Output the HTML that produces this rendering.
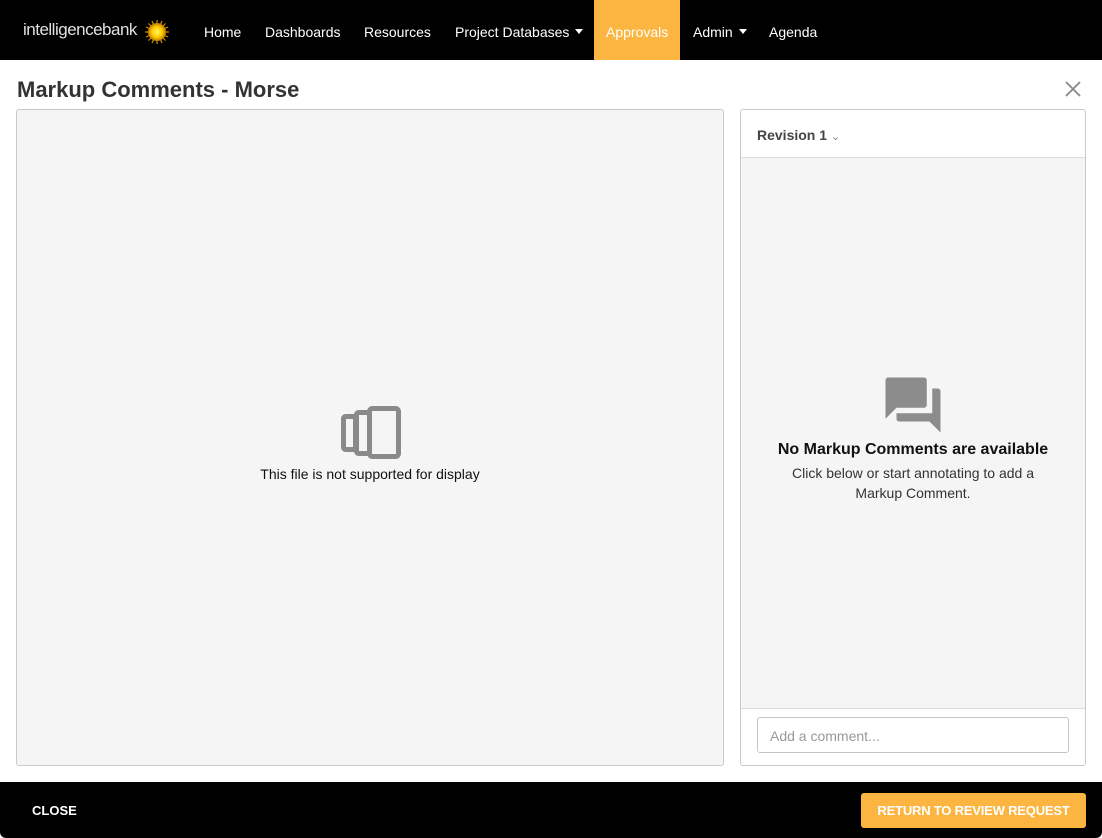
<!DOCTYPE html>
<html><head><meta charset="utf-8"><style>
*{box-sizing:border-box;margin:0;padding:0}
body{width:1102px;height:838px;overflow:hidden;background:#fff;font-family:"Liberation Sans",Arial,sans-serif;position:relative}
.nav{position:absolute;left:0;top:0;width:1102px;height:60px;background:#000;color:#fff;font-size:14px}
.nav .logo{position:absolute;left:23px;top:20px;font-size:17px;color:#e0e0e0;letter-spacing:-0.5px}
.nav a{position:absolute;top:0;height:60px;line-height:64px;color:#fff;text-decoration:none}
.car{display:inline-block;width:0;height:0;border-left:4px solid transparent;border-right:4px solid transparent;border-top:5px solid #fff;vertical-align:3px;margin-left:6px}
.appr{background:#fbb540;padding:0 12px}
h1{position:absolute;left:17px;top:77px;font-size:22px;font-weight:bold;color:#333}
.x{position:absolute;left:1064px;top:80px}
.left{position:absolute;left:16px;top:109px;width:708px;height:657px;background:#f5f5f5;border:1px solid #c9c9c9;border-radius:3px}
.right{position:absolute;left:740px;top:109px;width:346px;height:657px;background:#f5f5f5;border:1px solid #c9c9c9;border-radius:3px;overflow:hidden}
.rhead{height:48px;background:#fff;border-bottom:1px solid #ddd;padding:17px 0 0 16px;font-size:14px;font-weight:bold;color:#444}
.rfoot{position:absolute;left:0;bottom:0;width:100%;height:57px;background:#fff;border-top:1px solid #ddd}
.inp{position:absolute;left:16px;top:8px;width:312px;height:36px;border:1px solid #c4c4c4;border-radius:3px;padding:10px 12px;font-size:14px;color:#999}
.foot{position:absolute;left:0;top:782px;width:1102px;height:56px;background:#000;border-radius:0 0 6px 6px}
.close{position:absolute;left:32px;top:21px;color:#fff;font-weight:bold;font-size:13px}
.btn{position:absolute;left:861px;top:11px;width:225px;height:35px;background:#fbb540;border-radius:3px;color:#fff;font-weight:bold;font-size:13px;text-align:center;line-height:35px;letter-spacing:-0.2px}
</style></head><body>
<div class="nav">
<div class="logo">intelligencebank</div>
<svg style="position:absolute;left:144px;top:19px" width="26" height="26" viewBox="0 0 26 26"><defs><radialGradient id="g"><stop offset="0" stop-color="#fff36a"/><stop offset=".55" stop-color="#ffd000"/><stop offset="1" stop-color="#c07a00"/></radialGradient></defs><g stroke="#d89000" stroke-width="1.2"><path d="M13 1V25M1 13H25M4.5 4.5L21.5 21.5M21.5 4.5L4.5 21.5M8 2L18 24M18 2L8 24M2 8L24 18M2 18L24 8"/></g><circle cx="13" cy="13" r="9" fill="url(#g)"/></svg>
<a style="left:204px">Home</a>
<a style="left:265px">Dashboards</a>
<a style="left:364px">Resources</a>
<a style="left:455px">Project Databases<span class="car"></span></a>
<a class="appr" style="left:594px;width:86px">Approvals</a>
<a style="left:693px">Admin<span class="car"></span></a>
<a style="left:769px">Agenda</a>
</div>
<h1>Markup Comments - Morse</h1>
<svg class="x" width="18" height="18" viewBox="0 0 18 18"><path d="M2 2L16 16M16 2L2 16" stroke="#888" stroke-width="1.8"/></svg>
<div class="left">
<svg style="position:absolute;left:322px;top:296px" width="64" height="54" viewBox="0 0 64 54"><g fill="none" stroke="#8a8a8a" stroke-width="5" stroke-linejoin="round"><rect x="4.5" y="10.5" width="12" height="33" rx="2"/><rect x="17.5" y="6.5" width="13" height="41" rx="2"/><rect x="30.5" y="2.5" width="29" height="48" rx="3"/></g></svg>
<div style="position:absolute;left:0;width:100%;top:356px;text-align:center;font-size:14px;color:#111">This file is not supported for display</div>
</div>
<div class="right">
<div class="rhead">Revision 1 <span style="font-weight:normal;color:#888;font-size:11px">&#8964;</span></div>
<svg style="position:absolute;left:139px;top:262px" width="66" height="66" viewBox="0 0 24 24"><path fill="#8c8c8c" d="M21 6h-2v9H6v2c0 .55.45 1 1 1h11l4 4V7c0-.55-.45-1-1-1zm-4 6V3c0-.55-.45-1-1-1H3c-.55 0-1 .45-1 1v14l4-4h10c.55 0 1-.45 1-1z"/></svg>
<div style="position:absolute;left:0;width:100%;top:331px;text-align:center;font-size:16px;font-weight:bold;color:#111">No Markup Comments are available</div>
<div style="position:absolute;left:0;width:100%;top:353px;text-align:center;font-size:14px;color:#333;line-height:20px">Click below or start annotating to add a<br>Markup Comment.</div>
<div class="rfoot"><div class="inp">Add a comment...</div></div>
</div>
<div class="foot"><div class="close">CLOSE</div><div class="btn">RETURN TO REVIEW REQUEST</div></div>
</body></html>
